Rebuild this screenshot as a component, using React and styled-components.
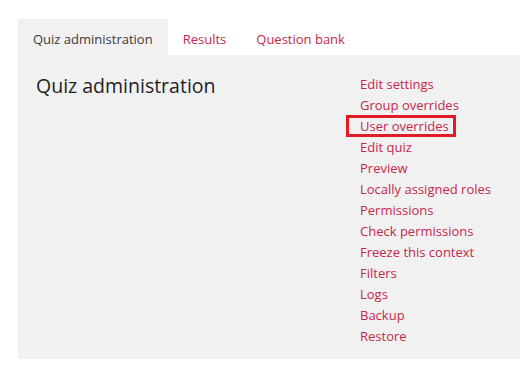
import React from "react";
import styled, { createGlobalStyle } from "styled-components";

const GlobalStyle = createGlobalStyle`
  html, body {
    margin: 0;
    padding: 0;
    background: #ffffff;
    font-family: "Open Sans", "Noto Sans", sans-serif;
  }
`;

export const Page = styled.div`
  width: 520px;
  height: 365px;
  padding: 19px 0 0 18px;
  box-sizing: border-box;
  display: flex;
  flex-direction: column;
`;

export const Tabs = styled.div`
  display: flex;
  height: 36px;
`;

export const Tab = styled.div`
  display: flex;
  align-items: center;
  padding: 3px 15px 0;
  font-size: 13px;
  color: ${(p) => (p.active ? "#3a3a3a" : "#c4284c")};
  background: ${(p) => (p.active ? "#f1f1f1" : "transparent")};
`;

export const Panel = styled.div`
  background: #f1f1f1;
  height: 304px;
  display: flex;
  padding: 17px 0 0 18px;
  box-sizing: border-box;
`;

export const Heading = styled.h2`
  margin: 0;
  width: 324px;
  font-size: 19.5px;
  font-weight: 400;
  color: #222;
  line-height: 28px;
`;

export const Links = styled.ul`
  list-style: none;
  margin: 0;
  padding: 2px 0 0 0;
`;

export const Item = styled.li`
  font-size: 13px;
  line-height: 21px;
  height: 21px;
  color: #c4284c;
  position: relative;
  ${(p) =>
    p.marked &&
    `
    &::before {
      content: "";
      position: absolute;
      left: -14px;
      top: -1px;
      width: 104px;
      height: 16px;
      border: 3px solid #e01b24;
    }
  `}
`;

const links = [
  "Edit settings",
  "Group overrides",
  "User overrides",
  "Edit quiz",
  "Preview",
  "Locally assigned roles",
  "Permissions",
  "Check permissions",
  "Freeze this context",
  "Filters",
  "Logs",
  "Backup",
  "Restore",
];

const App = () => {
  return (
    <>
      <GlobalStyle />
      <Page>
        <Tabs>
          <Tab active>Quiz administration</Tab>
          <Tab>Results</Tab>
          <Tab>Question bank</Tab>
        </Tabs>
        <Panel>
          <Heading>Quiz administration</Heading>
          <Links>
            {links.map((l) => (
              <Item key={l} marked={l === "User overrides"}>
                {l}
              </Item>
            ))}
          </Links>
        </Panel>
      </Page>
    </>
  );
};

export default App;
